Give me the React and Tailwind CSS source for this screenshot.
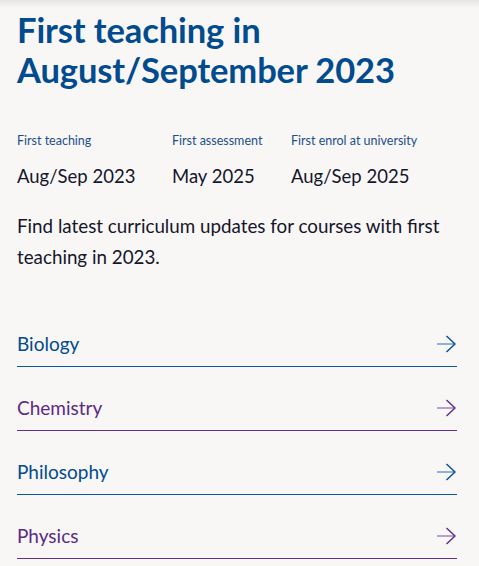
import React from 'react';

const subjects = [
  { name: 'Biology', tone: 'blue' },
  { name: 'Chemistry', tone: 'purple' },
  { name: 'Philosophy', tone: 'blue' },
  { name: 'Physics', tone: 'purple' },
];

function Arrow({ tone }) {
  const head = tone === 'blue' ? '#00509a' : '#5f2b8f';
  const shaft = tone === 'blue' ? '#7aa0c6' : '#a88bc4';
  return (
    <svg width="21" height="18" viewBox="0 0 21 18" fill="none" className="shrink-0">
      <path d="M1 9H19" stroke={shaft} strokeWidth="1.6" />
      <path d="M10.5 1L19 9L10.5 17" stroke={head} strokeWidth="1.4" />
    </svg>
  );
}

export default function App() {
  return (
    <div className="min-h-[566px] bg-[#f8f7f6] font-['Lato',sans-serif] relative overflow-hidden">
      {/* top shadow strip */}
      <div className="absolute top-0 left-0 right-0 h-[8px] bg-gradient-to-b from-[#e6e6e6] to-[#f8f7f6]" />

      <div className="relative px-[17px] pt-[10px]">
        <h1 className="text-[34.5px] leading-[40px] font-bold text-[#014b8e] tracking-[-0.1px]">
          First teaching in
          <br />
          August/September 2023
        </h1>

        <div className="mt-[43px] flex">
          <div className="w-[155px]">
            <p className="text-[12.5px] leading-[16px] text-[#1d4f8a]">First teaching</p>
            <p className="mt-[15px] text-[18.5px] leading-[24px] text-[#15152b]">Aug/Sep 2023</p>
          </div>
          <div className="w-[119px]">
            <p className="text-[12.5px] leading-[16px] text-[#1d4f8a]">First assessment</p>
            <p className="mt-[15px] text-[18.5px] leading-[24px] text-[#15152b]">May 2025</p>
          </div>
          <div>
            <p className="text-[12.5px] leading-[16px] text-[#1d4f8a]">First enrol at university</p>
            <p className="mt-[15px] text-[18.5px] leading-[24px] text-[#15152b]">Aug/Sep 2025</p>
          </div>
        </div>

        <p className="mt-[22px] text-[18.8px] leading-[31px] text-[#15152b] pr-[20px]">
          Find latest curriculum updates for courses with first teaching in 2023.
        </p>

        <ul className="mt-[49px] w-[440px]">
          {subjects.map((s) => (
            <li
              key={s.name}
              className={
                s.tone === 'blue'
                  ? 'mt-[18px] first:mt-0 flex items-center justify-between h-[46px] border-b-[1.5px] border-[#0a55a0] text-[#014b8e]'
                  : 'mt-[18px] first:mt-0 flex items-center justify-between h-[46px] border-b-[1.5px] border-[#652f98] text-[#5a2a86]'
              }
            >
              <span className="text-[19px] leading-[24px]">{s.name}</span>
              <Arrow tone={s.tone} />
            </li>
          ))}
        </ul>
      </div>
    </div>
  );
}
